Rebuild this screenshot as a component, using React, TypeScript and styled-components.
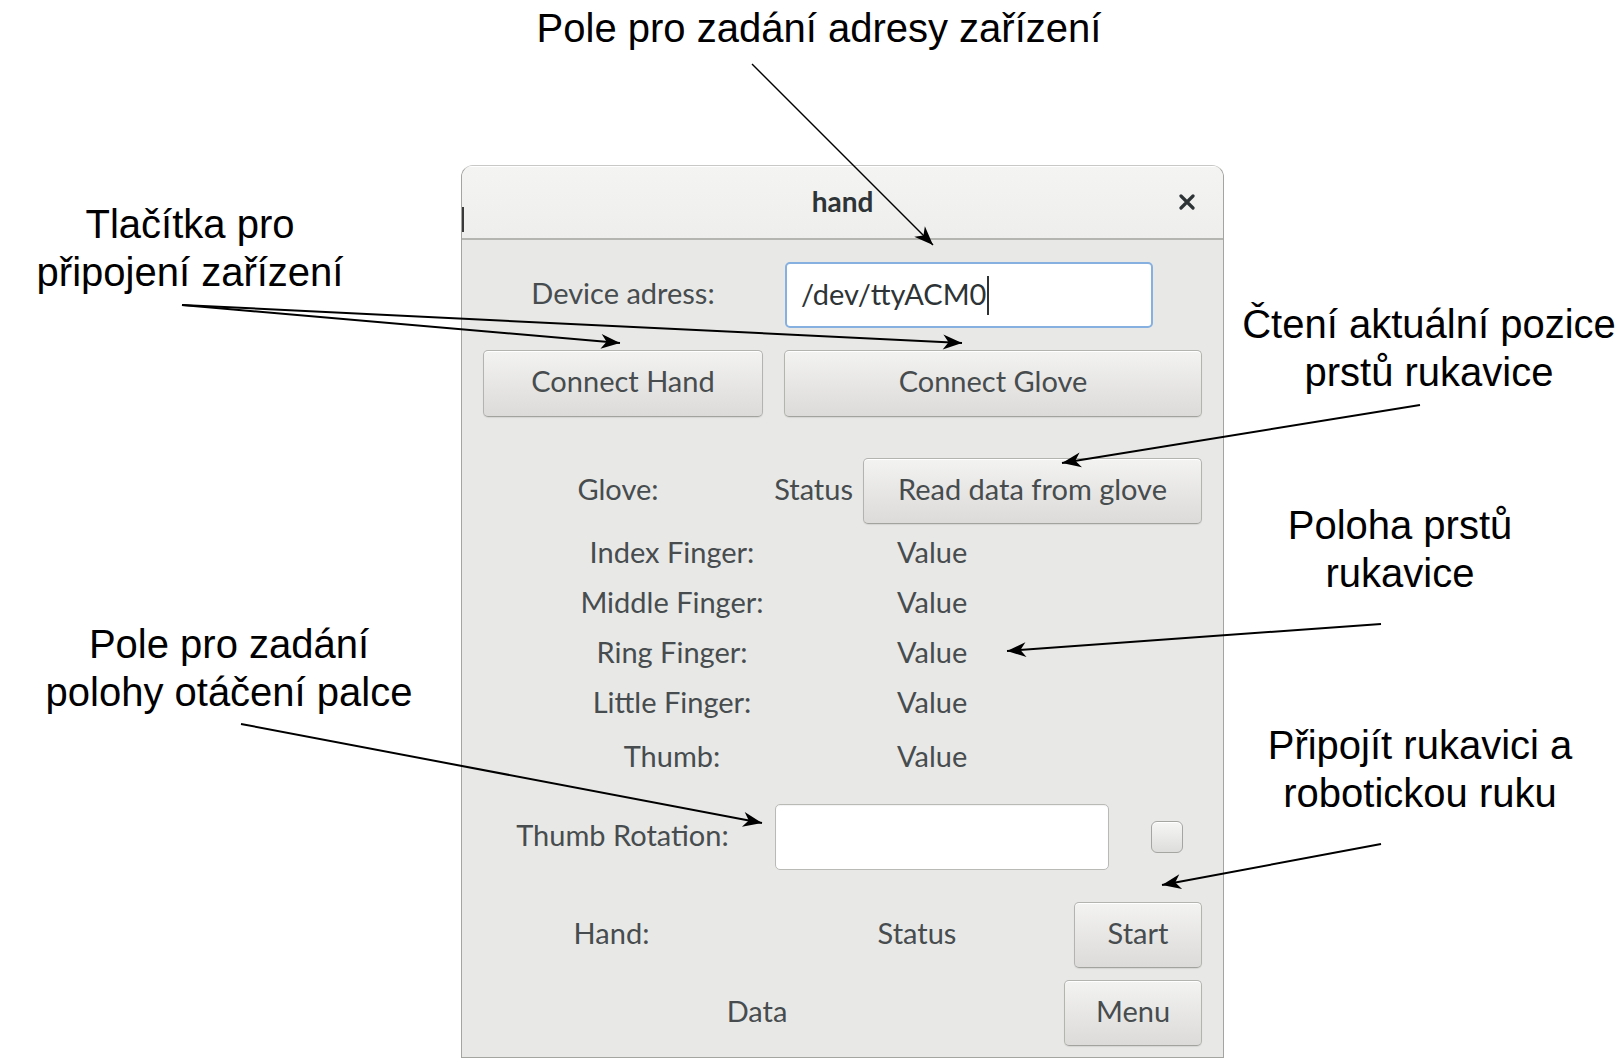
import React from "react";
import styled, { createGlobalStyle } from "styled-components";

const GlobalStyle = createGlobalStyle`
  html, body { margin: 0; padding: 0; background: #ffffff; }
  #root { width: 1622px; height: 1060px; }
`;

const Canvas = styled.div`
  position: relative;
  width: 1622px;
  height: 1060px;
  overflow: hidden;
  background: #ffffff;
`;

const Note = styled.div<{ $cx: number; $top: number; $w: number }>`
  position: absolute;
  left: ${(p) => p.$cx - p.$w / 2}px;
  top: ${(p) => p.$top}px;
  width: ${(p) => p.$w}px;
  text-align: center;
  font-family: "Liberation Sans", Arial, sans-serif;
  font-size: 40px;
  line-height: 48px;
  color: #000;
  white-space: nowrap;
`;

const ArrowLayer = styled.svg`
  position: absolute;
  left: 0;
  top: 0;
  width: 1622px;
  height: 1060px;
  pointer-events: none;
  z-index: 5;
`;

const Window = styled.div`
  position: absolute;
  left: 461px;
  top: 165px;
  width: 763px;
  box-sizing: border-box;
  border: 1px solid #a4a4a1;
  border-top-color: #c8c8c6;
  border-radius: 12px 12px 0 0;
  background: #e8e8e7;
  overflow: hidden;
  font-family: Lato, "Noto Sans", sans-serif;
  font-size: 29px;
  color: #474c4e;
`;

const TitleBar = styled.div`
  position: relative;
  height: 72px;
  display: grid;
  grid-template-columns: 1fr auto 1fr;
  align-items: center;
  background: linear-gradient(to bottom, #f4f4f3, #eeeeed);
  border-bottom: 2px solid #b4b4b1;
  box-shadow: inset 0 1px 0 #ffffff;

  &::before {
    content: "";
    position: absolute;
    left: 0;
    top: 41px;
    width: 2px;
    height: 25px;
    background: #3a3a3a;
  }
`;

const Title = styled.div`
  grid-column: 2;
  font-weight: 700;
  font-size: 28px;
  color: #2e3436;
  margin-top: -2px;
`;

const CloseButton = styled.div`
  grid-column: 3;
  justify-self: end;
  margin-right: 28px;
  width: 16px;
  height: 16px;
  display: flex;
  align-items: center;
  justify-content: center;
`;

const Body = styled.div`
  padding: 0 21px 11px 21px;
  display: flex;
  flex-direction: column;
`;

const Row = styled.div<{ $cols: string; $gap?: number; $h: number; $mt: number }>`
  display: grid;
  grid-template-columns: ${(p) => p.$cols};
  column-gap: ${(p) => p.$gap ?? 0}px;
  align-items: center;
  height: ${(p) => p.$h}px;
  margin-top: ${(p) => p.$mt}px;
`;

const Label = styled.div<{ $align?: string; $pl?: number; $pr?: number }>`
  text-align: ${(p) => p.$align ?? "center"};
  padding-left: ${(p) => p.$pl ?? 0}px;
  padding-right: ${(p) => p.$pr ?? 0}px;
  padding-bottom: 6px;
  white-space: nowrap;
`;

const Button = styled.div<{ $h: number }>`
  height: ${(p) => p.$h}px;
  box-sizing: border-box;
  display: flex;
  align-items: center;
  justify-content: center;
  padding-bottom: 6px;
  border: 1px solid #b3b3b0;
  border-bottom-color: #a2a29f;
  border-radius: 5px;
  background: linear-gradient(to bottom, #f3f3f2, #e5e4e2 60%, #dcdbd9);
  box-shadow: inset 0 1px 0 #ffffff, 0 1px 1px rgba(0, 0, 0, 0.08);
  color: #474c4e;
  white-space: nowrap;
`;

const Entry = styled.div<{ $focused?: boolean }>`
  height: 66px;
  box-sizing: border-box;
  display: flex;
  align-items: center;
  padding-left: 14px;
  padding-bottom: 4px;
  background: #ffffff;
  border: ${(p) => (p.$focused ? "2px solid #86b0df" : "1px solid #b9b9b6")};
  border-radius: 5px;
  color: #2e3436;
  box-shadow: ${(p) => (p.$focused ? "none" : "inset 0 1px 1px rgba(0,0,0,0.05)")};
`;

const Caret = styled.span`
  display: inline-block;
  width: 2px;
  height: 39px;
  background: #2e3436;
  margin-left: 1px;
  margin-top: 4px;
`;

const CheckBox = styled.div`
  justify-self: end;
  margin-right: 19px;
  width: 32px;
  height: 32px;
  box-sizing: border-box;
  border: 1px solid #a5a5a2;
  border-radius: 6px;
  background: linear-gradient(to bottom, #f6f6f5, #dddddb);
  box-shadow: inset 0 1px 0 #ffffff;
`;

const fingers = ["Index Finger:", "Middle Finger:", "Ring Finger:", "Little Finger:"];

const arrows: Array<[number, number, number, number, number]> = [
  [752, 64, 933, 245, 1.4],
  [182, 305, 620, 343, 2],
  [182, 305, 962, 343, 2],
  [1420, 405, 1062, 463, 2],
  [1381, 624, 1007, 651, 2],
  [241, 724, 762, 823, 2],
  [1381, 844, 1162, 885, 2],
];

export default function App() {
  return (
    <>
      <GlobalStyle />
      <Canvas>
        <Window>
          <TitleBar>
            <Title>hand</Title>
            <CloseButton>
              <svg width="16" height="16" viewBox="0 0 16 16">
                <path d="M2 2 L14 14 M14 2 L2 14" stroke="#2e3436" strokeWidth="3.2" strokeLinecap="round" />
              </svg>
            </CloseButton>
          </TitleBar>
          <Body>
            <Row $cols="280px 368px" $gap={22} $h={66} $mt={22}>
              <Label>Device adress:</Label>
              <Entry $focused>
                /dev/ttyACM0
                <Caret />
              </Entry>
            </Row>
            <Row $cols="280px 418px" $gap={21} $h={67} $mt={22}>
              <Button $h={67}>Connect Hand</Button>
              <Button $h={67}>Connect Glove</Button>
            </Row>
            <Row $cols="270px 110px 339px" $h={66} $mt={41}>
              <Label>Glove:</Label>
              <Label $align="right" $pr={10}>Status</Label>
              <Button $h={66}>Read data from glove</Button>
            </Row>
            {fingers.map((f, i) => (
              <Row key={f} $cols="378px 1fr" $gap={36} $h={50} $mt={i === 0 ? 5 : 0}>
                <Label>{f}</Label>
                <Label $align="left">Value</Label>
              </Row>
            ))}
            <Row $cols="378px 1fr" $gap={36} $h={50} $mt={4}>
              <Label>Thumb:</Label>
              <Label $align="left">Value</Label>
            </Row>
            <Row $cols="292px 334px 1fr" $h={66} $mt={21}>
              <Label $pr={13}>Thumb Rotation:</Label>
              <Entry />
              <CheckBox />
            </Row>
            <Row $cols="257px 1fr 128px" $h={66} $mt={32}>
              <Label>Hand:</Label>
              <Label $pl={20}>Status</Label>
              <Button $h={66}>Start</Button>
            </Row>
            <Row $cols="1fr 138px" $h={66} $mt={12}>
              <Label $pr={33}>Data</Label>
              <Button $h={66}>Menu</Button>
            </Row>
          </Body>
        </Window>

        <Note $cx={819} $top={4} $w={700}>Pole pro zadání adresy zařízení</Note>
        <Note $cx={190} $top={200} $w={380}>
          Tlačítka pro
          <br />
          připojení zařízení
        </Note>
        <Note $cx={1429} $top={300} $w={420}>
          Čtení aktuální pozice
          <br />
          prstů rukavice
        </Note>
        <Note $cx={1400} $top={501} $w={320}>
          Poloha prstů
          <br />
          rukavice
        </Note>
        <Note $cx={229} $top={620} $w={420}>
          Pole pro zadání
          <br />
          polohy otáčení palce
        </Note>
        <Note $cx={1420} $top={721} $w={380}>
          Připojít rukavici a
          <br />
          robotickou ruku
        </Note>

        <ArrowLayer viewBox="0 0 1622 1060">
          <defs>
            <marker
              id="head"
              viewBox="-21 -9 22 18"
              markerWidth="22"
              markerHeight="18"
              refX="0"
              refY="0"
              orient="auto"
              markerUnits="userSpaceOnUse"
            >
              <path d="M0 0 L-19 -7.5 L-13.5 0 L-19 7.5 Z" fill="#000" />
            </marker>
          </defs>
          {arrows.map(([x1, y1, x2, y2, w], i) => (
            <line key={i} x1={x1} y1={y1} x2={x2} y2={y2} stroke="#000" strokeWidth={w} markerEnd="url(#head)" />
          ))}
        </ArrowLayer>
      </Canvas>
    </>
  );
}
